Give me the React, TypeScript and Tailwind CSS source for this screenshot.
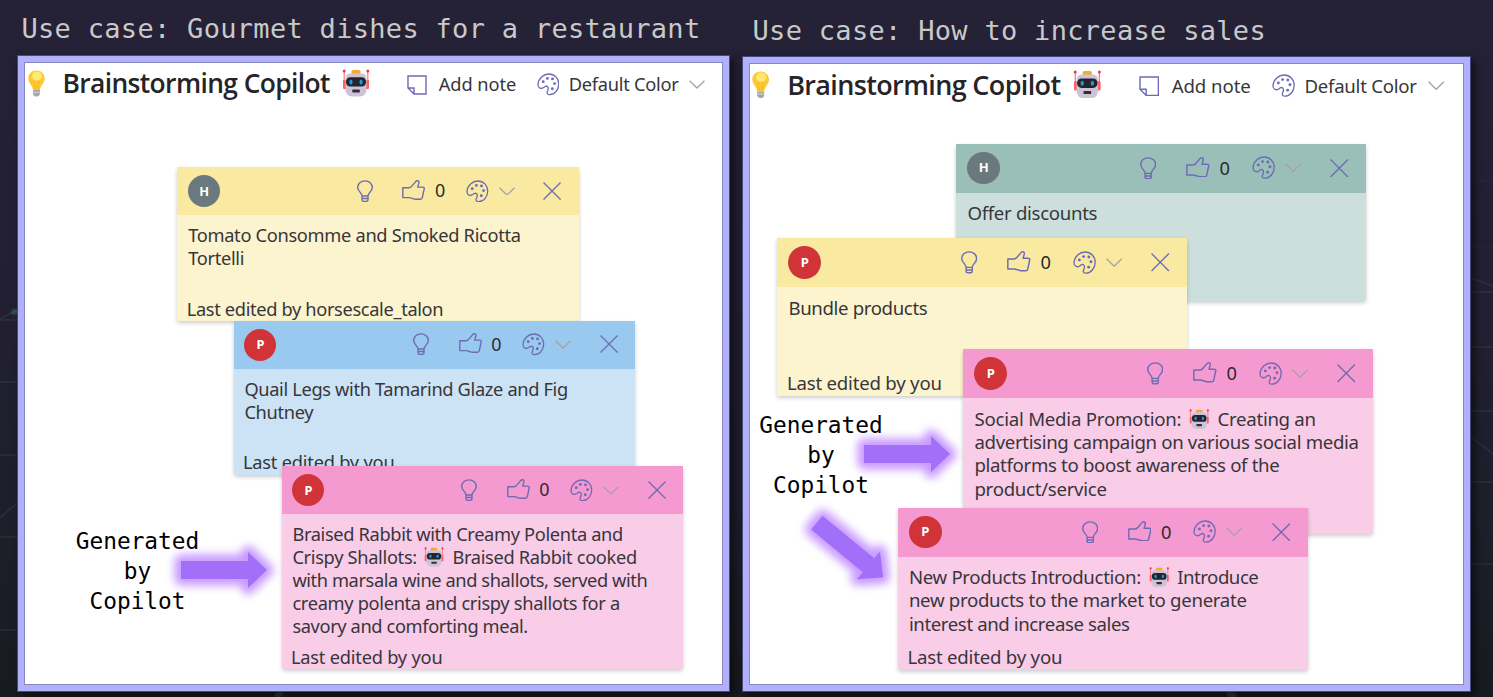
import { useLayoutEffect, useRef, type ReactNode } from "react";

/** A single line of text whose tracking is adjusted to fill `w` units (16 units = 1em). */
function Fit({ w, className = "", children }: { w: number; className?: string; children: ReactNode }) {
  const box = useRef<HTMLSpanElement>(null);
  const text = useRef<HTMLSpanElement>(null);
  useLayoutEffect(() => {
    if (!box.current || !text.current) return;
    const el = text.current;
    el.style.letterSpacing = "0px";
    const room = box.current.getBoundingClientRect().width;
    const natural = el.getBoundingClientRect().width;
    const count = (el.textContent || " ").length;
    el.style.letterSpacing = `${(room - natural) / count}px`;
  }, [w, children]);
  return (
    <span ref={box} className="flex shrink-0 items-center" style={{ width: `${w / 16}em` }}>
      <span ref={text} className={`inline-block whitespace-nowrap leading-none ${className}`}>
        {children}
      </span>
    </span>
  );
}

function Robot({ className }: { className: string }) {
  return (
    <svg viewBox="0 0 28 28" className={`shrink-0 ${className}`}>
      <path d="M2.2 2v17M25.8 2v17" stroke="#f9747c" strokeWidth="1.2" />
      <circle cx="2.2" cy="2" r="1.5" fill="#f23b45" />
      <circle cx="25.8" cy="2" r="1.5" fill="#f23b45" />
      <rect x="1" y="11" width="5" height="9" rx="1" fill="#fb5f68" />
      <rect x="22" y="11" width="5" height="9" rx="1" fill="#fb5f68" />
      <rect x="9.500" y="1" width="9" height="5" rx="1.500" fill="#fba62c" />
      <path d="M9.500 4.500h9c4.500 0 6 2 6 6.500v7c0 6-1.500 9.500-7 9.500h-7c-5.500 0-7-3.500-7-9.500v-7c0-4.500 1.500-6.500 6-6.500z" fill="#cdc2d6" />
      <rect x="4" y="8.300" width="20" height="9.200" rx="4.300" fill="#25232b" />
      <ellipse cx="9" cy="12.900" rx="1.600" ry="2.500" fill="#149fe0" />
      <ellipse cx="19" cy="12.900" rx="1.600" ry="2.500" fill="#149fe0" />
      <rect x="10.300" y="20.500" width="7.500" height="3" rx="0.600" fill="#302d35" />
    </svg>
  );
}

function BulbEmoji() {
  return (
    <svg viewBox="0 0 17 27" className="mb-[0.1em] h-[1.69em] w-[1.06em] shrink-0">
      <path d="M8.500.5C3.800.5.3 4 .3 8.400c0 4.700 4 6.400 4.700 11.600h7c.7-5.200 4.700-6.900 4.700-11.600C16.700 4 13.200.5 8.500.5z" fill="#fcc935" />
      <ellipse cx="9" cy="6" rx="5" ry="4.500" fill="#ffea70" />
      <path d="M6 11l1.500 8M11 11l-1.500 8" stroke="#f5b21d" strokeWidth="0.900" />
      <path d="M5 20h7v3.500c0 1.500-1 3-3.500 3S5 25 5 23.500z" fill="#a7a7ab" />
      <path d="M5 22.300h7" stroke="#d5d5d8" />
    </svg>
  );
}

function Palette({ className = "" }: { className?: string }) {
  return (
    <svg viewBox="0 0 23 23" className={`h-[1.42em] w-[1.42em] shrink-0 ${className}`} fill="none" stroke="#6d6bb3" strokeWidth="1.300">
      <path d="M1 11.500C1.500 5.500 6.500 1 12 1c5.700 0 10 4.500 10 10.200 0 6-4.300 10.800-9.300 10.800-2.300 0-3-1.500-2.200-3.200.8-1.700 1.700-3.400.3-4.800-1.500-1.400-3-.3-4.200.8C4.500 16.500.8 15.500 1 11.500z" />
      <g fill="#6d6bb3" stroke="none">
        <circle cx="6.300" cy="8.800" r="1.450" />
        <circle cx="10.500" cy="5.500" r="1.400" />
        <circle cx="15.700" cy="6" r="1.450" />
        <circle cx="17.800" cy="10.700" r="1.450" />
        <circle cx="15.500" cy="16" r="1.450" />
      </g>
    </svg>
  );
}

function Chevron() {
  return (
    <svg viewBox="0 0 16 9" className="h-[0.56em] w-[1em] shrink-0" fill="none" stroke="#a6a3a6" strokeWidth="1.300">
      <path d="M.5.700 8 8.100 15.500.700" />
    </svg>
  );
}

function NoteIcon() {
  return (
    <svg viewBox="0 0 20 20" className="h-[1.25em] w-[1.25em] shrink-0" fill="none" stroke="#6d6bb3" strokeWidth="1.400">
      <path d="M1 1h18v18H7L1 13zM1 13h6v6" />
    </svg>
  );
}

function Bulb() {
  return (
    <svg viewBox="0 0 16 22" className="h-[1.38em] w-[1em] shrink-0" fill="none" stroke="#6d6bb3" strokeWidth="1.400">
      <path d="M5 16c0-3.500-4.300-4.500-4.300-8.600C.7 3.500 3.900.8 8 .8s7.300 2.700 7.300 6.600c0 4.100-4.300 5.100-4.300 8.600zM5 16v3.500C5 20.600 5.700 21.300 6.600 21.300h2.800c.9 0 1.600-.7 1.600-1.800V16M5 18.500h6" />
    </svg>
  );
}

function Thumb() {
  return (
    <svg viewBox="0 0 23 20" className="mb-[0.15em] h-[1.25em] w-[1.44em] shrink-0" fill="none" stroke="#6d6bb3" strokeWidth="1.400" strokeLinejoin="round">
      <path d="M.8 7.800H7c1.200 0 1.900-.6 2.800-1.700l3.900-4.500c1.500-1.600 3.700-.6 3.200 1.300l-1.200 4.200h5.100c1 0 1.600.7 1.400 1.700l-1.900 8.900c-.2 1-.9 1.600-1.900 1.600h-5L7.500 17.600H.8z" />
    </svg>
  );
}

function Cross() {
  return (
    <svg viewBox="0 0 18 18" className="h-[1.13em] w-[1.13em] shrink-0" stroke="#6d6bb3" strokeWidth="1.300">
      <path d="M.5.500l17 17M17.500.500l-17 17" />
    </svg>
  );
}

const bodyText = "font-['Noto_Sans',sans-serif] text-[1.14em] text-[#37363a]";

type Part = string | { before: string; beforeW: number; after: string; afterW: number };
type Line = { text: Part; w: number };

function NoteLine({ line }: { line: Line }) {
  const t = line.text;
  if (typeof t === "string") {
    return (
      <div className="flex h-[1.431em] items-center">
        <Fit w={line.w} className={bodyText}>{t}</Fit>
      </div>
    );
  }
  return (
    <div className="flex h-[1.431em] items-center">
      <Fit w={t.beforeW} className={bodyText}>{t.before}</Fit>
      <Robot className="ml-[0.47em] mr-[0.5em] h-[1.25em] w-[1.25em]" />
      <Fit w={t.afterW} className={bodyText}>{t.after}</Fit>
    </div>
  );
}

function Note({ place, head, body, who, lines, footer, footerW = 0 }: {
  place: string; head: string; body: string; who: "H" | "P"; lines: Line[]; footer?: string; footerW?: number;
}) {
  return (
    <article className={`absolute flex w-[25.08em] flex-col rounded-[3px] shadow-[0_2px_4px_rgba(0,0,0,0.2)] ${place} ${body}`}>
      <div className={`flex h-[3em] shrink-0 items-center pl-[0.68em] pr-[1.07em] ${head}`}>
        <span className={`flex h-[2em] w-[2em] items-center justify-center rounded-full ${who === "H" ? "bg-[#69797e]" : "bg-[#d13438]"}`}>
          <span className="font-['Noto_Sans',sans-serif] text-[0.8em] font-bold leading-none text-white">{who}</span>
        </span>
        <span className="ml-auto flex items-center">
          <Bulb />
          <span className="w-[1.84em]" />
          <Thumb />
          <span className="ml-[0.56em] flex w-[0.7em] justify-center">
            <span className="font-['Noto_Sans',sans-serif] text-[1.12em] leading-none text-[#2b2b2e]">0</span>
          </span>
          <Palette className="ml-[1.29em] mr-[0.62em]" />
          <Chevron />
          <span className="w-[1.78em]" />
          <Cross />
        </span>
      </div>
      <div className="flex min-h-0 flex-1 flex-col pl-[0.68em] pt-[0.56em]">
        {lines.map((l, i) => <NoteLine key={i} line={l} />)}
        {footer && (
          <div className="-ml-[0.09em] mb-[0.05em] mt-auto flex h-[1.43em] items-center">
            <Fit w={footerW} className={bodyText}>{footer}</Fit>
          </div>
        )}
      </div>
    </article>
  );
}

function Toolbar() {
  return (
    <header className="flex h-[2.69em] items-center">
      <BulbEmoji />
      <span className="w-[1.09em]" />
      <Fit w={267.5} className="mb-[0.08em] font-['Open_Sans','Noto_Sans',sans-serif] text-[1.65em] font-semibold text-[#252427]">Brainstorming Copilot</Fit>
      <Robot className="mb-[0.18em] ml-[0.75em] mr-[2.3em] h-[1.75em] w-[1.75em]" />
      <NoteIcon />
      <span className="w-[0.75em]" />
      <Fit w={77.5} className={bodyText}>Add note</Fit>
      <Palette className="ml-[1.28em] mr-[0.58em]" />
      <Fit w={110} className={bodyText}>Default Color</Fit>
      <span className="w-[0.67em]" />
      <Chevron />
    </header>
  );
}

function Generated({ place }: { place: string }) {
  return (
    <div className={`absolute w-[124px] text-center font-['DejaVu_Sans_Mono',monospace] text-[22.8px] leading-[30px] text-black ${place}`}>
      Generated<br />by<br />Copilot
    </div>
  );
}

function Arrow({ place }: { place: string }) {
  return (
    <svg viewBox="0 0 86 36" className={`absolute h-[36px] w-[86px] overflow-visible ${place}`}>
      <path d="M0 9h67V0l19 18-19 18v-9H0z" fill="#c99aff" stroke="#c99aff" strokeWidth="13" strokeLinejoin="round" className="blur-[4px]" />
      <path d="M0 9h67V0l19 18-19 18v-9H0z" fill="#a270f8" />
    </svg>
  );
}

const yellow = { head: "bg-[#fae9a0]", body: "bg-[#fcf4cf]" };
const blue = { head: "bg-[#99c9ef]", body: "bg-[#cce3f5]" };
const pink = { head: "bg-[#f599d1]", body: "bg-[#f9cce8]" };
const green = { head: "bg-[#9abfb8]", body: "bg-[#ccdfdc]" };

function Backdrop() {
  return (
    <svg viewBox="0 0 1493 697" className="absolute inset-0 h-full w-full" fill="none" stroke="#ffffff" strokeOpacity="0.070" strokeWidth="1.500">
      <path d="M1471 292h22M1471 347h22M1471 411h22M1471 482h22M1471 564h22M1471 278l22 8M1471 437l22 17" />
      <path d="M1471 181h22M1471 208h22M1471 247h22" strokeOpacity="0.025" />
      <path d="M0 320h17M0 382h17M0 455h17M0 537h17M0 630h17M0 518l17-15M0 319l17-9" />
      <ellipse cx="15" cy="312" rx="4" ry="3" fill="#4d9b83" fillOpacity="0.350" stroke="none" className="blur-[1px]" />
      <path d="M282 692l-6 5M1228 692l7 5" stroke="#5fae95" strokeOpacity="0.200" strokeWidth="6" />
    </svg>
  );
}

export default function App() {
  const heading = "whitespace-pre font-['DejaVu_Sans_Mono',monospace] leading-none text-[#c9c9c9]";
  const panel = "border border-[#4b487c] bg-[#b0b0fc] p-[6px] shadow-[4px_4px_8px_rgba(0,0,0,0.55)]";
  return (
    <div className="relative h-[697px] w-[1493px] overflow-hidden bg-[linear-gradient(#252136_0%,#231f33_40%,#1d1f2a_75%,#171b20_100%)]">
      <Backdrop />
      <main className="relative flex gap-[12px] pl-[17px]">
        <section className="flex w-[713px] flex-col">
          <div className="flex h-[55px] pb-[12px] pl-[4.500px] pt-[14px] text-[16px]">
            <Fit w={679} className={`text-[27px] ${heading}`}>Use case: Gourmet dishes for a restaurant</Fit>
          </div>
          <div className={`h-[637px] ${panel}`}>
            <div className="relative h-full border border-[#8986bd] bg-white pl-[3px] text-[16px]">
              <Toolbar />
              <Note place="left-[152.300px] top-[104px] h-[154px]" {...yellow} who="H"
                lines={[{ text: "Tomato Consomme and Smoked Ricotta", w: 332.5 }, { text: "Tortelli", w: 56 }]}
                footer="Last edited by horsescale_talon" footerW={256.5} />
              <Note place="left-[208.500px] top-[257.500px] h-[154px]" {...blue} who="P"
                lines={[{ text: "Quail Legs with Tamarind Glaze and Fig", w: 323.5 }, { text: "Chutney", w: 69 }]}
                footer="Last edited by you" footerW={151.5} />
              <Note place="left-[256.500px] top-[403px] h-[203px]" {...pink} who="P"
                lines={[
                  { text: "Braised Rabbit with Creamy Polenta and", w: 330.5 },
                  { text: { before: "Crispy Shallots:", beforeW: 124.5, after: "Braised Rabbit cooked", afterW: 184.5 }, w: 0 },
                  { text: "with marsala wine and shallots, served with", w: 355 },
                  { text: "creamy polenta and crispy shallots for a", w: 327.5 },
                  { text: "savory and comforting meal.", w: 235.5 },
                ]}
                footer="Last edited by you" footerW={151.5} />
              <Generated place="left-[50.500px] top-[462.500px]" />
              <Arrow place="left-[156px] top-[489px]" />
            </div>
          </div>
        </section>

        <section className="flex w-[729px] flex-col">
          <div className="flex h-[56px] pb-[10px] pl-[10.500px] pt-[15px] text-[16px]">
            <Fit w={513.5} className={`text-[27px] ${heading}`}>Use case: How to increase sales</Fit>
          </div>
          <div className={`h-[636px] ${panel}`}>
            <div className="relative h-full border border-[#8986bd] bg-white pl-[2px] text-[16.350px]">
              <Toolbar />
              <Note place="left-[206.300px] top-[79.500px] h-[157.500px]" {...green} who="H"
                lines={[{ text: "Offer discounts", w: 127 }]} />
              <Note place="left-[27.300px] top-[174px] h-[158px]" {...yellow} who="P"
                lines={[{ text: "Bundle products", w: 136 }]}
                footer="Last edited by you" footerW={151.5} />
              <Note place="left-[213.300px] top-[285px] h-[185px]" {...pink} who="P"
                lines={[
                  { text: { before: "Social Media Promotion:", beforeW: 202.5, after: "Creating an", afterW: 96 }, w: 0 },
                  { text: "advertising campaign on various social media", w: 376 },
                  { text: "platforms to boost awareness of the", w: 298.5 },
                  { text: "product/service", w: 129.5 },
                ]} />
              <Note place="left-[147.800px] top-[443.500px] h-[162px]" {...pink} who="P"
                lines={[
                  { text: { before: "New Products Introduction:", beforeW: 227, after: "Introduce", afterW: 79.5 }, w: 0 },
                  { text: "new products to the market to generate", w: 330.5 },
                  { text: "interest and increase sales", w: 216 },
                ]}
                footer="Last edited by you" footerW={151.5} />
              <Generated place="left-[9px] top-[345.500px]" />
              <Arrow place="left-[114px] top-[372px]" />
              <Arrow place="left-[57px] top-[468px] rotate-[39.500deg]" />
            </div>
          </div>
        </section>
      </main>
    </div>
  );
}
